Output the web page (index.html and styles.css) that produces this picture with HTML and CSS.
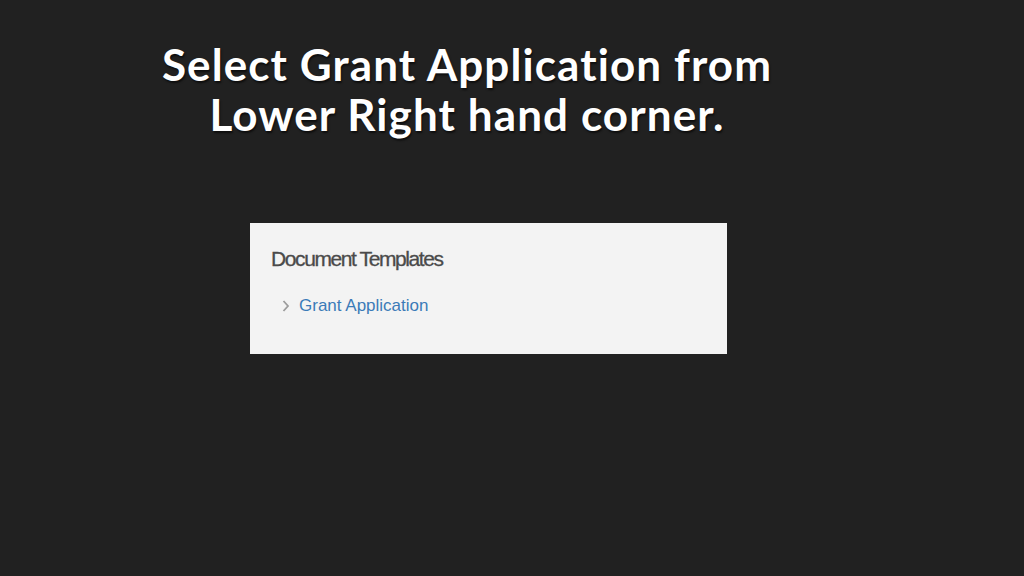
FILE: index.html
```html
<!DOCTYPE html>
<html>
<head>
<meta charset="utf-8">
<link rel="stylesheet" href="styles.css">
</head>
<body>
<div class="slide">
  <h1 class="title">Select Grant Application from<br>Lower Right hand corner.</h1>
  <div class="panel">
    <div class="panel-heading">Document Templates</div>
    <div class="item">
      <svg class="chev" width="8" height="14" viewBox="0 0 8 14"><path d="M1.5 2 L6 7 L1.5 12" fill="none" stroke="#9c9c9c" stroke-width="1.8"/></svg>
      <span class="link">Grant Application</span>
    </div>
  </div>
</div>
</body>
</html>
```
FILE: styles.css
```css
html, body {
  margin: 0;
  padding: 0;
  background: #212121;
}
.slide {
  width: 1024px;
  height: 576px;
  background: #212121;
  display: flex;
  flex-direction: column;
  overflow: hidden;
}
.title {
  margin: 39px 0 0 0;
  width: 934px;
  text-align: center;
  font-family: "Lato", "Liberation Sans", sans-serif;
  font-weight: 700;
  font-size: 44px;
  line-height: 50px;
  letter-spacing: 1.1px;
  font-variant-ligatures: none;
  color: #ffffff;
  text-shadow: 1px 2px 2px rgba(0,0,0,0.6);
}
.panel {
  margin: 84px 0 0 250px;
  width: 477px;
  height: 131px;
  box-sizing: border-box;
  background: #f3f3f3;
  padding: 24px 0 0 21px;
  font-family: "Liberation Sans", Arial, sans-serif;
}
.panel-heading {
  font-size: 21px;
  line-height: 24px;
  letter-spacing: -1.4px;
  color: #4a4a4a;
  -webkit-text-stroke: 0.3px #4a4a4a;
}
.item {
  margin-top: 25px;
  display: flex;
  align-items: center;
  padding-left: 11px;
}
.chev {
  margin-right: 9px;
}
.link {
  font-size: 17px;
  line-height: 20px;
  color: #3b7bb8;
}
```
